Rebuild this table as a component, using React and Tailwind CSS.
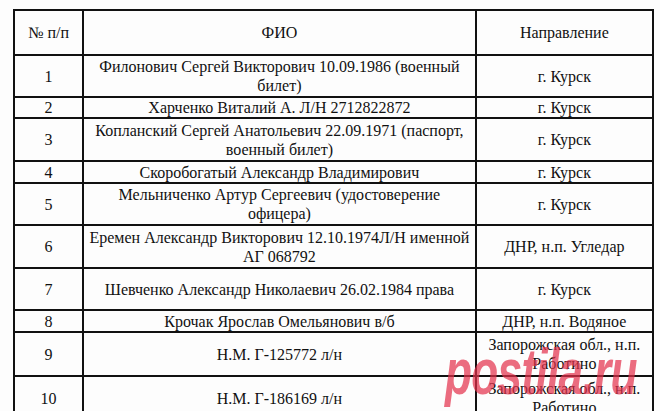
const rows = [
  { n: "1", fio: ["Филонович Сергей Викторович 10.09.1986 (военный", "билет)"], dir: ["г. Курск"], h: "h-[42px]" },
  { n: "2", fio: ["Харченко Виталий А. Л/Н 2712822872"], dir: ["г. Курск"], h: "h-[21px]" },
  { n: "3", fio: ["Копланский Сергей Анатольевич 22.09.1971 (паспорт,", "военный билет)"], dir: ["г. Курск"], h: "h-[43px]" },
  { n: "4", fio: ["Скоробогатый Александр Владимирович"], dir: ["г. Курск"], h: "h-[22px]" },
  { n: "5", fio: ["Мельниченко Артур Сергеевич (удостоверение", "офицера)"], dir: ["г. Курск"], h: "h-[42px]" },
  { n: "6", fio: ["Еремен Александр Викторович 12.10.1974Л/Н именной", "АГ 068792"], dir: ["ДНР, н.п. Угледар"], h: "h-[43px]" },
  { n: "7", fio: ["Шевченко Александр Николаевич 26.02.1984 права"], dir: ["г. Курск"], h: "h-[42px]" },
  { n: "8", fio: ["Крочак Ярослав Омельянович в/б"], dir: ["ДНР, н.п. Водяное"], h: "h-[22px]" },
  { n: "9", fio: ["Н.М. Г-125772 л/н"], dir: ["Запорожская обл., н.п.", "Работино"], h: "h-[44px]" },
  { n: "10", fio: ["Н.М. Г-186169 л/н"], dir: ["Запорожская обл., н.п.", "Работино"], h: "h-[44px]" },
];

function Lines({ lines }) {
  return lines.map((l, i) => (
    <span key={i} className="block whitespace-nowrap">
      {l}
    </span>
  ));
}

export default function App() {
  return (
    <div className="relative w-[660px] h-[411px] overflow-hidden bg-[#fdfdfd] pt-[9px] pl-[13px] text-[#111] [font-family:'Liberation_Serif',serif] text-[16px] leading-[19px]">
      <table className="table-fixed border-collapse w-[641px]">
        <colgroup>
          <col className="w-[69px]" />
          <col className="w-[392px]" />
          <col className="w-[177px]" />
        </colgroup>
        <tbody>
          <tr className="h-[45px]">
            <td className="border-2 border-[#111] text-center">№ п/п</td>
            <td className="border-2 border-[#111] text-center">ФИО</td>
            <td className="border-2 border-[#111] text-center">Направление</td>
          </tr>
          {rows.map((r) => (
            <tr key={r.n} className={r.h}>
              <td className="border-2 border-[#111] text-center p-0">{r.n}</td>
              <td className="border-2 border-[#111] text-center p-0">
                <Lines lines={r.fio} />
              </td>
              <td className="border-2 border-[#111] text-center p-0">
                <Lines lines={r.dir} />
              </td>
            </tr>
          ))}
        </tbody>
      </table>
      {/* watermark over the scan */}
      <div className="absolute left-[445px] top-[340px] origin-left scale-x-[0.69] text-[64px] leading-none font-bold italic text-[#e4304a] opacity-70 [font-family:'Liberation_Sans',sans-serif] tracking-[-1px] pointer-events-none">
        postila.ru
      </div>
    </div>
  );
}
